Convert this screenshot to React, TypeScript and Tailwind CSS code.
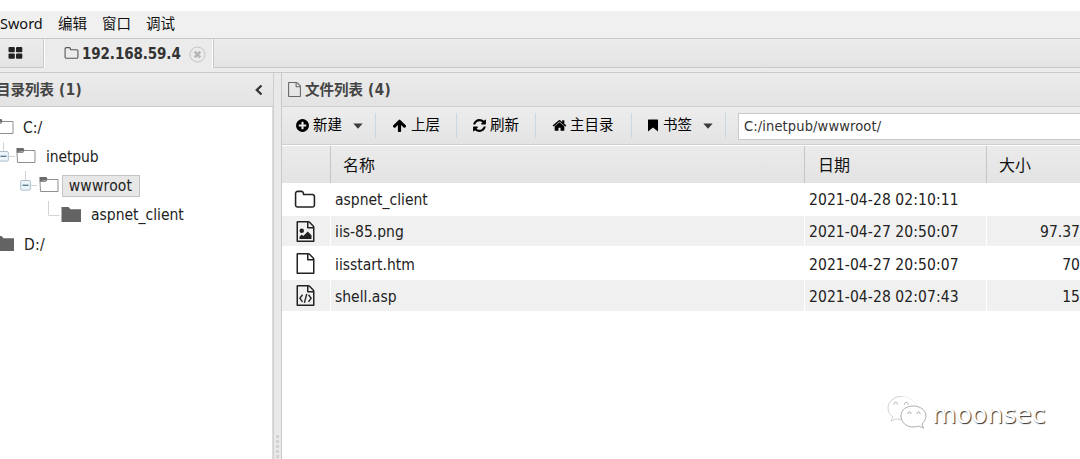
import React from "react";

const latin = "font-['DejaVu_Sans_Condensed','DejaVu_Sans','Noto_Sans_CJK_SC',sans-serif]";

const paths = {
  folder:
    "M1600 1312v-704q0-40-28-68t-68-28h-704q-40 0-68-28t-28-68v-64q0-40-28-68t-68-28h-320q-40 0-68 28t-28 68v960q0 40 28 68t68 28h1216q40 0 68-28t28-68zm128-704v704q0 92-66 158t-158 66h-1216q-92 0-158-66t-66-158v-960q0-92 66-158t158-66h320q92 0 158 66t66 158v32h672q92 0 158 66t66 158z",
  file:
    "M1596 380q28 28 48 76t20 88v1152q0 40-28 68t-68 28h-1344q-40 0-68-28t-28-68v-1600q0-40 28-68t68-28h896q40 0 88 20t76 48zm-444-244v376h376q-10-29-22-41l-313-313q-12-12-41-22zm384 1528v-1024h-416q-40 0-68-28t-28-68v-416h-768v1536h1280z",
  plus:
    "M1344 960v-128q0-26-19-45t-45-19h-256v-256q0-26-19-45t-45-19h-128q-26 0-45 19t-19 45v256h-256q-26 0-45 19t-19 45v128q0 26 19 45t45 19h256v256q0 26 19 45t45 19h128q26 0 45-19t19-45v-256h256q26 0 45-19t19-45zm320-64q0 209-103 385.5t-279.5 279.5-385.5 103-385.5-103-279.5-279.5-103-385.5 103-385.5 279.5-279.5 385.5-103 385.5 103 279.5 279.5 103 385.5z",
  up:
    "M1675 971q0 51-37 90l-75 75q-38 38-91 38-54 0-90-38l-294-293v704q0 52-37.5 84.5t-90.500 32.500h-128q-53 0-90.500-32.500t-37.500-84.500v-704l-294 293q-36 38-90 38t-90-38l-75-75q-38-38-38-90 0-53 38-91l651-651q35-37 90-37 54 0 91 37l651 651q37 39 37 91z",
  refresh:
    "M1639 1056q0 5-1 7-64 268-268 434.500t-478 166.500q-146 0-282.500-55t-243.500-157l-129 129q-19 19-45 19t-45-19-19-45v-448q0-26 19-45t45-19h448q26 0 45 19t19 45-19 45l-137 137q71 66 161 102t187 36q134 0 250-65t186-179q11-17 53-117 8-23 30-23h192q13 0 22.500 9.500t9.500 22.500zm25-800v448q0 26-19 45t-45 19h-448q-26 0-45-19t-19-45 19-45l138-138q-148-137-349-137-134 0-250 65t-186 179q-11 17-53 117-8 23-30 23h-199q-13 0-22.500-9.500t-9.500-22.500v-7q65-268 270-434.500t480-166.500q146 0 284 55.500t245 156.500l130-129q19-19 45-19t45 19 19 45z",
  home:
    "M1472 992v480q0 26-19 45t-45 19h-384v-384h-256v384h-384q-26 0-45-19t-19-45v-480q0-1 .5-3t.5-3l575-474 575 474q1 2 1 6zm223-69l-62 74q-8 9-21 11h-3q-13 0-21-7l-692-577-692 577q-12 8-24 7-13-2-21-11l-62-74q-8-10-7-23.500t11-21.500l719-599q32-26 76-26t76 26l244 204v-195q0-14 9-23t23-9h192q14 0 23 9t9 23v408l219 182q10 8 11 21.500t-7 23.500z",
};

function Glyph({ d, className, children }: { d: string; className: string; children?: React.ReactNode }) {
  return (
    <svg viewBox="0 0 1792 1792" className={`shrink-0 ${className}`} fill="currentColor">
      <path d={d} />
      {children}
    </svg>
  );
}

function TreeFolder({ filled }: { filled?: boolean }) {
  return (
    <svg width="20" height="17" viewBox="0 0 20 17" className="shrink-0">
      {filled ? (
        <path d="M0.500 0h7l2 2.300h10.500v12.700H0.500z" fill="#636363" />
      ) : (
        <>
          <path d="M1 4.500h6l1-2h11v12H1.500z" fill="#fff" stroke="#8f8f8f" />
          <path d="M0.500 5V0h7l1 2.300-1.500 1.200-5.500.5z" fill="#6b6b6b" />
        </>
      )}
    </svg>
  );
}

function Minus() {
  return (
    <svg width="22" height="29" viewBox="0 0 22 29" className="shrink-0">
      <path d="M5.500 0v9M11 14.500h6" stroke="#d3d3d3" fill="none" />
      <rect x="0.700" y="9.500" width="9.600" height="9.600" rx="1" fill="#eef5fa" stroke="#a9bfcd" />
      <path d="M2.500 14.300h6" stroke="#5d7f94" strokeWidth="1.400" />
    </svg>
  );
}

function Caret() {
  return (
    <svg width="10" height="6" viewBox="0 0 10 6" className="shrink-0">
      <path d="M0.300 0.500h9.400L5 5.700z" fill="#3c3c3c" />
    </svg>
  );
}

function PanelTitle({ label, count, className }: { label: string; count: number; className: string }) {
  return (
    <span className={`pt-px text-[14.500px] font-bold whitespace-pre text-[#444] ${className}`}>
      {label}
      <span className="text-[15px] tracking-[0.4px]"> ({count})</span>
    </span>
  );
}

function Tool({ icon, label, width, iconClass, caret, gap }: { icon: React.ReactNode; label: string; width: string; iconClass: string; caret?: boolean; gap?: string }) {
  return (
    <div className={`flex h-[25px] shrink-0 items-center border-r border-[#c9d8e0] pb-px ${width} ${iconClass}`}>
      {icon}
      <span className={`-mt-px text-[14.500px] leading-[22px] whitespace-nowrap text-black ${gap ?? "ml-[4px]"}`}>{label}</span>
      {caret && <span className="ml-[11px] flex pt-px"><Caret /></span>}
    </div>
  );
}

const files = [
  { name: "aspnet_client", date: "2021-04-28 02:10:11", size: "", kind: "folder", row: "h-[33px]", pad: "pt-[3px]" },
  { name: "iis-85.png", date: "2021-04-27 20:50:07", size: "97.37", kind: "image", row: "h-[30px] bg-[#f0f0f0]", pad: "pt-[3px]" },
  { name: "iisstart.htm", date: "2021-04-27 20:50:07", size: "70", kind: "file", row: "h-[34px]", pad: "pt-[5px]" },
  { name: "shell.asp", date: "2021-04-28 02:07:43", size: "15", kind: "code", row: "h-[31px] bg-[#f0f0f0]", pad: "pt-[4px]" },
];

function FileIcon({ kind }: { kind: string }) {
  if (kind === "folder") return <Glyph d={paths.folder} className="size-[22px] text-[#222]" />;
  return (
    <Glyph d={paths.file} className="size-[21px] text-[#222]">
      {kind === "image" && (
        <>
          <path d="M1408 1216v320H384v-192l192-192 128 128 384-384z" />
          <circle cx="576" cy="832" r="192" />
        </>
      )}
      {kind === "code" && (
        <path d="M640 832l-225 300 225 300M1152 832l225 300-225 300M1000 770l-200 750" fill="none" stroke="currentColor" strokeWidth="115" />
      )}
    </Glyph>
  );
}

function Watermark() {
  return (
    <div className="absolute top-[394px] left-[886px] flex">
      <svg width="42" height="38" viewBox="0 0 42 38" fill="#fff">
        <path d="M16 2.500C8 2 2 8 2 14c0 4 2 7 5 9l-2 4 5-2 6 .5" stroke="#bbb" strokeWidth=".7" />
        <path d="M16 2.500c7 0 12 4 13 9" stroke="#e6e6e6" strokeWidth=".7" />
        <path d="M8 10.500c0-3 3.500-3 3.500 0M18.500 10.500c0-3 3.500-3 3.500 0" fill="none" stroke="#aaa" />
        <path d="M27 12c-7 0-12 4-12 10s5 11 12 11c2 0 4-.5 5.500-1l5 2-1.500-4c2-2 4-5 4-8 0-6-6-10-13-10z" stroke="#999" strokeWidth=".8" />
        <path d="M22 20c0-3 3-3 3 0M31 20c0-3 3-3 3 0" fill="none" stroke="#aaa" />
      </svg>
      <span className="mt-[4px] ml-[4px] font-['DejaVu_Sans',sans-serif] text-[25px] leading-[34px] tracking-[0.1px] text-white [text-shadow:1px_1px_1px_#333]">moonsec</span>
    </div>
  );
}

export default function App() {
  return (
    <div className={`relative flex h-[459px] w-[1080px] flex-col overflow-hidden bg-[#ebebeb] pt-[11px] text-[#222] shadow-[inset_0_11px_0_#fff] ${latin}`}>
      <div className="flex h-[27px] shrink-0 items-center bg-[#f0f0f0] text-[14.500px] text-[#111]">
        <span className="w-[58px] pb-[2px] font-['Noto_Sans',sans-serif]">Sword</span>
        <span className="w-[44px]">编辑</span>
        <span className="w-[44px]">窗口</span>
        <span>调试</span>
      </div>

      <div className="flex h-[30px] shrink-0 border-t border-[#c9c9c9]">
        <div className="flex w-[44px] items-center border-r border-b border-[#c9c9c9] bg-linear-to-b from-[#ececec] to-[#e4e4e4]">
          <svg width="15" height="12" viewBox="0 0 15 12" className="ml-[8px] text-[#222]" fill="currentColor">
            <rect x=".5" y="0" width="6.300" height="5.300" rx="1" />
            <rect x="8" y="0" width="6.300" height="5.300" rx="1" />
            <rect x=".5" y="6.500" width="6.300" height="5.300" rx="1" />
            <rect x="8" y="6.500" width="6.300" height="5.300" rx="1" />
          </svg>
        </div>
        <div className="flex w-[170px] items-center border-r border-[#c9c9c9] bg-[#ebebeb] pl-5 shadow-[inset_1px_0_#fff,inset_-1px_0_#fff]">
          <Glyph d={paths.folder} className="size-[15px] text-[#555]" />
          <span className="ml-[3px] w-[107px] pt-[2px] text-[15px] font-bold tracking-[-0.1px] text-[#333]">192.168.59.4</span>
          <svg width="17" height="17" viewBox="0 0 17 17" className="mt-px shrink-0" fill="none">
            <circle cx="8.500" cy="8.500" r="7.500" stroke="#c2c2c2" />
            <path d="M5.700 5.700l5.600 5.600M11.300 5.700l-5.600 5.600" stroke="#b5b5b5" strokeWidth="2.500" />
          </svg>
        </div>
        <div className="flex-1 border-b border-[#c9c9c9] bg-linear-to-b from-[#ececec] to-[#e4e4e4]" />
      </div>

      <div className="mt-[4px] flex min-h-0 flex-1 border-t border-[#c9c9c9]">
        <div className="flex w-[274px] shrink-0 flex-col border-r border-[#cfcfcf]">
          <div className="flex h-[34px] shrink-0 items-center justify-between border-b border-[#c9c9c9] bg-linear-to-b from-[#ececec] to-[#e3e3e3] pr-[9px]">
            <PanelTitle label="目录列表" count={1} className="-ml-[4px]" />
            <svg width="10" height="12" viewBox="0 0 10 12" fill="none">
              <path d="M7.500 1.500L2.800 6l4.700 4.500" stroke="#333" strokeWidth="2.300" />
            </svg>
          </div>
          <div className="flex-1 border-r border-[#dedede] bg-white pt-[6px] text-[15.500px]">
            <div className="flex h-[29px] items-center">
              <span className="-ml-[6px] flex"><TreeFolder /></span>
              <span className="mt-[3px] ml-[9px]">C:/</span>
            </div>
            <div className="flex h-[29px] items-center">
              <span className="-ml-[2px] flex w-[18px]"><Minus /></span>
              <TreeFolder />
              <span className="mt-[3px] ml-[10px] tracking-[-0.1px]">inetpub</span>
            </div>
            <div className="flex h-[29px] items-center">
              <span className="ml-[20px] flex w-[18.500px]"><Minus /></span>
              <TreeFolder />
              <span className="ml-[3px] flex h-[22px] w-[78px] items-center justify-center border border-[#c4c4c4] bg-[#e7e7e7] pt-[2px] tracking-[0.2px]">wwwroot</span>
            </div>
            <div className="flex h-[30px] items-center">
              <svg width="13" height="29" viewBox="0 0 13 29" className="ml-[48px] shrink-0" fill="none">
                <path d="M.5 0v14.500h11" stroke="#d3d3d3" />
              </svg>
              <TreeFolder filled />
              <span className="mt-px ml-[10px]">aspnet_client</span>
            </div>
            <div className="flex h-[29px] items-center">
              <span className="-ml-[6px] flex"><TreeFolder filled /></span>
              <span className="mt-[2px] ml-[10px] tracking-[0.3px]">D:/</span>
            </div>
          </div>
        </div>

        <div className="flex w-[7px] shrink-0 flex-col items-center justify-end bg-[#e9e9e9]">
          <div className="h-[24px] w-[3px] bg-[repeating-linear-gradient(#d2d2d2_0_3px,#e9e9e9_3px_5px)]" />
        </div>

        <div className="flex min-w-0 flex-1 flex-col border-l border-[#c9c9c9]">
          <div className="flex h-[34px] shrink-0 items-center border-b border-[#cfcfcf] bg-linear-to-b from-[#ececec] to-[#e3e3e3] pl-[5px]">
            <Glyph d={paths.file} className="size-[15px] text-[#666]" />
            <PanelTitle label="文件列表" count={4} className="ml-[3px]" />
          </div>
          <div className="flex h-[38px] shrink-0 items-center border-b border-[#cfcfcf] bg-linear-to-b from-[#ededed] to-[#e3e3e3] text-black">
            <Tool width="w-[94px]" iconClass="pl-[13px]" icon={<Glyph d={paths.plus} className="size-[15px]" />} label="新建" gap="ml-[3px]" caret />
            <Tool width="w-[81px]" iconClass="pl-[16px]" icon={<Glyph d={paths.up} className="size-[15px]" />} label="上层" />
            <Tool width="w-[79px]" iconClass="pl-[15px]" icon={<Glyph d={paths.refresh} className="size-[15px]" />} label="刷新" gap="ml-[3px]" />
            <Tool width="w-[96px]" iconClass="pl-[16px]" icon={<Glyph d={paths.home} className="size-[15px]" />} label="主目录" gap="ml-[3px]" />
            <Tool
              width="w-[94px]"
              iconClass="pl-[15px]"
              icon={<svg width="12" height="13" viewBox="0 0 12 13"><path d="M1.500.5h9q.5 0 .5.5v11.500L6 8.500l-5 4V1q0-.5.5-.5z" /></svg>}
              label="书签"
              caret
            />
            <div className="mt-px ml-[12px] flex h-[27px] flex-1 items-center border border-r-0 border-[#c9c9c9] bg-white pt-[2px] pl-[5px] text-[14.500px] tracking-[0.13px] text-[#333]">C:/inetpub/wwwroot/</div>
          </div>

          <div className="flex min-h-0 flex-1 flex-col bg-white pt-px text-[15.500px]">
            <div className="flex h-[37px] shrink-0 items-center bg-linear-to-b from-[#ebebeb] to-[#e3e3e3] text-[16px] text-[#111]">
              <div className="h-full w-[49px] border-r border-[#c6c6c6]" />
              <div className="flex h-full w-[474px] items-center border-r border-[#c6c6c6] pt-[2px] pl-[12px]">名称</div>
              <div className="flex h-full w-[182px] items-center border-r border-[#c6c6c6] pt-[2px] pl-[13px]">日期</div>
              <div className="pt-[2px] pl-[12px]">大小</div>
            </div>
            {files.map((f) => (
              <div key={f.name} className={`flex shrink-0 ${f.row}`}>
                <div className="flex w-[49px] items-center justify-center border-r border-white pr-[2px]"><FileIcon kind={f.kind} /></div>
                <div className={`flex w-[474px] items-center border-r border-white pl-[4px] ${f.pad}`}>{f.name}</div>
                <div className={`flex w-[182px] items-center border-r border-white pl-[4px] tracking-[0.08px] ${f.pad}`}>{f.date}</div>
                <div className={`flex flex-1 items-center justify-end ${f.pad}`}>{f.size}</div>
              </div>
            ))}
          </div>
        </div>
      </div>
      <Watermark />
    </div>
  );
}
